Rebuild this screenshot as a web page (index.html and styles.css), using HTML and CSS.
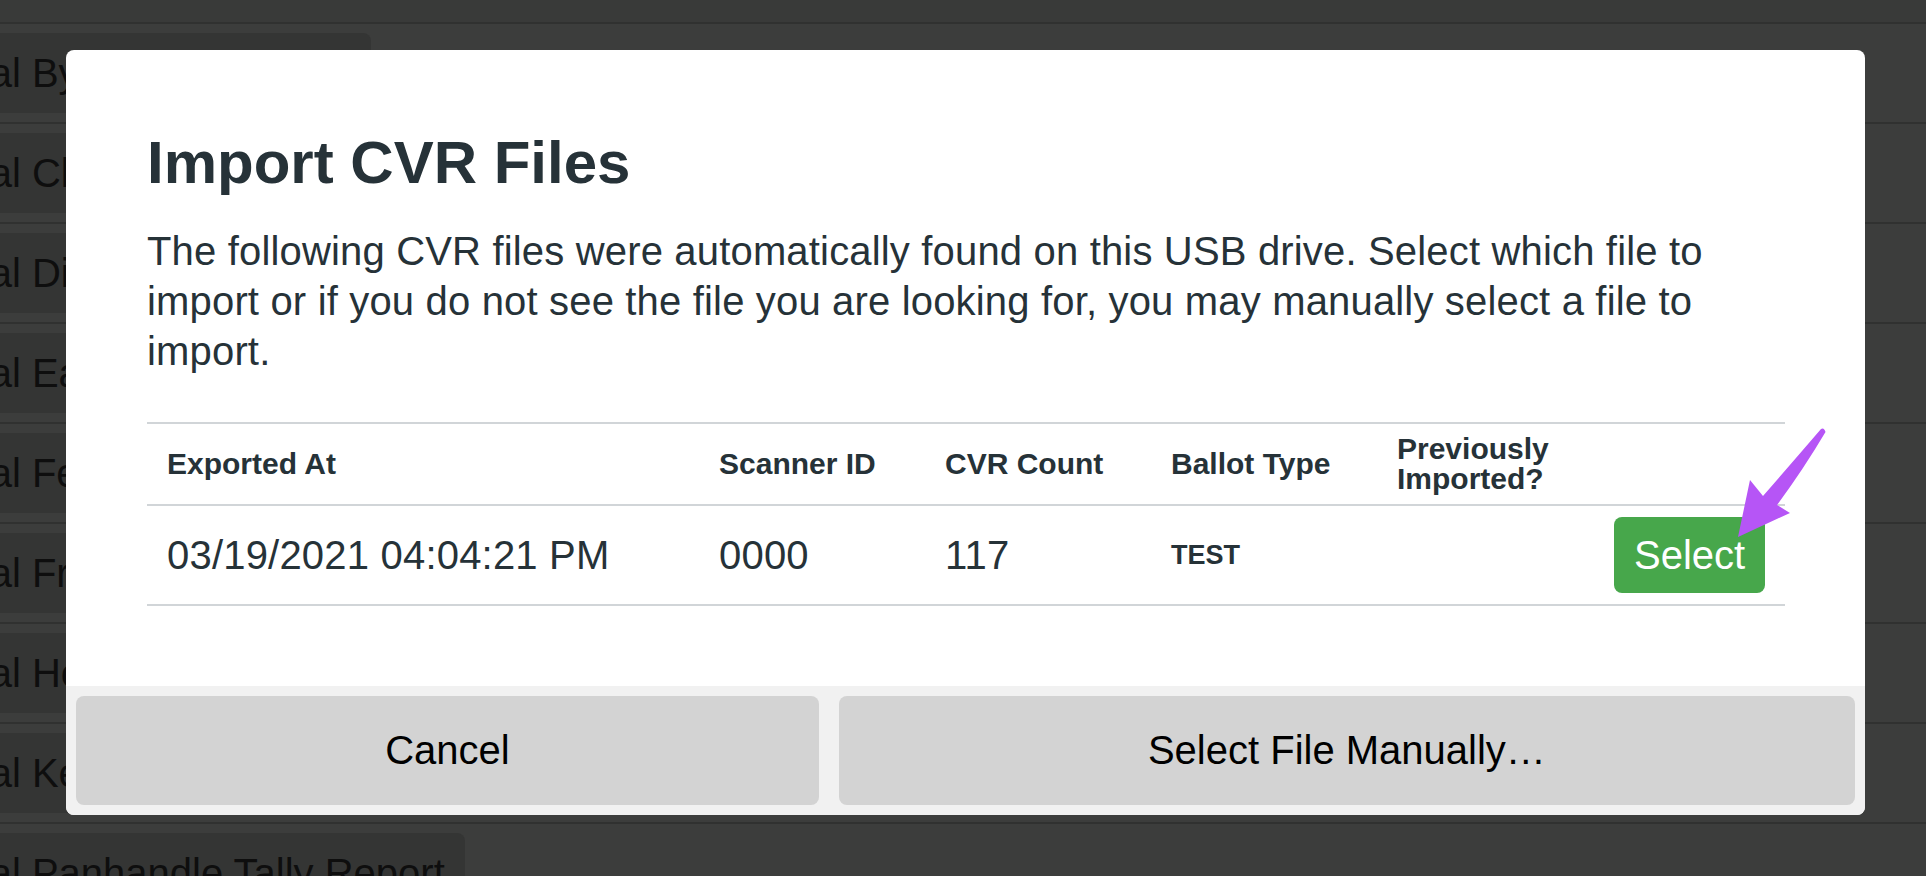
FILE: index.html
```html
<!DOCTYPE html>
<html lang="en">
<head>
<meta charset="utf-8">
<title>Import CVR Files</title>
<link rel="stylesheet" href="styles.css">
</head>
<body>
<div class="page">
  <div class="top-strip"></div>
  <ul class="report-list">
    <li class="report-row"><button class="report-btn">Unofficial Bylas Tally Report</button></li>
    <li class="report-row"><button class="report-btn">Unofficial Clay Tally Report</button></li>
    <li class="report-row"><button class="report-btn">Unofficial Dixie Tally Report</button></li>
    <li class="report-row"><button class="report-btn">Unofficial East Tally Report</button></li>
    <li class="report-row"><button class="report-btn">Unofficial Ferry Tally Report</button></li>
    <li class="report-row"><button class="report-btn">Unofficial Franklin Tally Report</button></li>
    <li class="report-row"><button class="report-btn">Unofficial Holmes Tally Report</button></li>
    <li class="report-row"><button class="report-btn">Unofficial Kent Tally Report</button></li>
    <li class="report-row"><button class="report-btn">Unofficial Panhandle Tally Report</button></li>
  </ul>
</div>

<div class="modal" role="dialog" aria-label="Import CVR Files">
  <div class="modal-content">
    <h1 class="modal-title">Import CVR Files</h1>
    <p class="modal-text">The following CVR files were automatically found on this USB drive. Select which file to import or if you do not see the file you are looking for, you may manually select a file to import.</p>
    <table class="cvr-table">
      <colgroup>
        <col class="col-date">
        <col class="col-mid">
        <col class="col-mid">
        <col class="col-mid">
        <col class="col-prev">
        <col>
      </colgroup>
      <thead>
        <tr>
          <th>Exported At</th>
          <th>Scanner ID</th>
          <th>CVR Count</th>
          <th>Ballot Type</th>
          <th>Previously Imported?</th>
          <th></th>
        </tr>
      </thead>
      <tbody>
        <tr>
          <td>03/19/2021 04:04:21 PM</td>
          <td>0000</td>
          <td>117</td>
          <td class="ballot-type">TEST</td>
          <td></td>
          <td class="action"><button class="btn-select">Select</button></td>
        </tr>
      </tbody>
    </table>
  </div>
  <div class="modal-footer">
    <button class="btn-footer">Cancel</button>
    <button class="btn-footer">Select File Manually…</button>
  </div>
</div>

<svg class="annotation-arrow" viewBox="0 0 120 130" aria-hidden="true">
  <path d="M43,76 Q70,45 101,9 Q104,7 105.5,12 Q83,50 57,85 L70,93 L18,117 L30,60 Z" fill="#b655f6"/>
</svg>
</body>
</html>
```

FILE: styles.css
```css
html, body {
  margin: 0;
  padding: 0;
}

body {
  position: relative;
  width: 1926px;
  height: 876px;
  overflow: hidden;
  background: #3c3d3c;
  font-family: "Liberation Sans", Arial, Helvetica, sans-serif;
}

/* Dimmed background page */
.page {
  height: 876px;
  overflow: hidden;
}

.top-strip {
  height: 22px;
  background: #393a39;
}

.report-list {
  list-style: none;
  margin: 0 0 0 -163px;
  padding: 0;
}

.report-row {
  border-top: 2px solid #303130;
  padding: 9px 0;
  height: 80px;
}

.report-btn {
  height: 80px;
  padding: 0 20px;
  border: 0;
  border-radius: 8px;
  background: #343534;
  color: #0e0e0e;
  font-family: "Liberation Sans", Arial, sans-serif;
  font-size: 40px;
  line-height: 80px;
  white-space: nowrap;
}

/* Modal */
.modal {
  position: absolute;
  left: 66px;
  top: 50px;
  width: 1799px;
  background: #ffffff;
  border-radius: 8px;
  overflow: hidden;
  color: #263238;
}

.modal-content {
  padding: 80px 80px 80px 81px;
}

.modal-title {
  margin: 0 0 30px;
  font-size: 60px;
  line-height: 66px;
  font-weight: 700;
}

.modal-text {
  margin: 0 0 46px;
  font-size: 40px;
  line-height: 50px;
  letter-spacing: 0.17px;
}

.cvr-table {
  width: 100%;
  table-layout: fixed;
  border-collapse: separate;
  border-spacing: 0;
  border-top: 2px solid #d1d5d8;
}

.col-date {
  width: 552px;
}

.col-mid {
  width: 226px;
}

.col-prev {
  width: 217px;
}

.cvr-table th {
  padding: 10px 20px;
  font-size: 30px;
  line-height: 30px;
  font-weight: 700;
  text-align: left;
  vertical-align: middle;
  border-bottom: 2px solid #d1d5d8;
}

.cvr-table td {
  padding: 11px 20px;
  font-size: 40px;
  line-height: 48px;
  letter-spacing: 0.2px;
  vertical-align: middle;
  white-space: nowrap;
  border-bottom: 2px solid #d1d5d8;
}

.cvr-table td.ballot-type {
  font-size: 27px;
  font-weight: 700;
  letter-spacing: 0;
}

.cvr-table td.action {
  text-align: right;
  letter-spacing: 0;
}

.btn-select {
  display: inline-block;
  vertical-align: middle;
  padding: 14px 20px;
  border: 0;
  border-radius: 8px;
  background: #47a74b;
  color: #ffffff;
  font-family: "Liberation Sans", Arial, sans-serif;
  font-size: 40px;
  line-height: 48px;
}

.modal-footer {
  display: flex;
  gap: 20px;
  padding: 10px;
  background: #f1f1f1;
}

.btn-footer {
  flex: 1 1 auto;
  padding: 30px 20px;
  border: 0;
  border-radius: 8px;
  background: #d3d3d3;
  color: #000000;
  font-family: "Liberation Sans", Arial, sans-serif;
  font-size: 40px;
  line-height: 49px;
}

/* Annotation arrow overlay */
.annotation-arrow {
  position: absolute;
  left: 1720px;
  top: 420px;
  width: 120px;
  height: 130px;
}
```
